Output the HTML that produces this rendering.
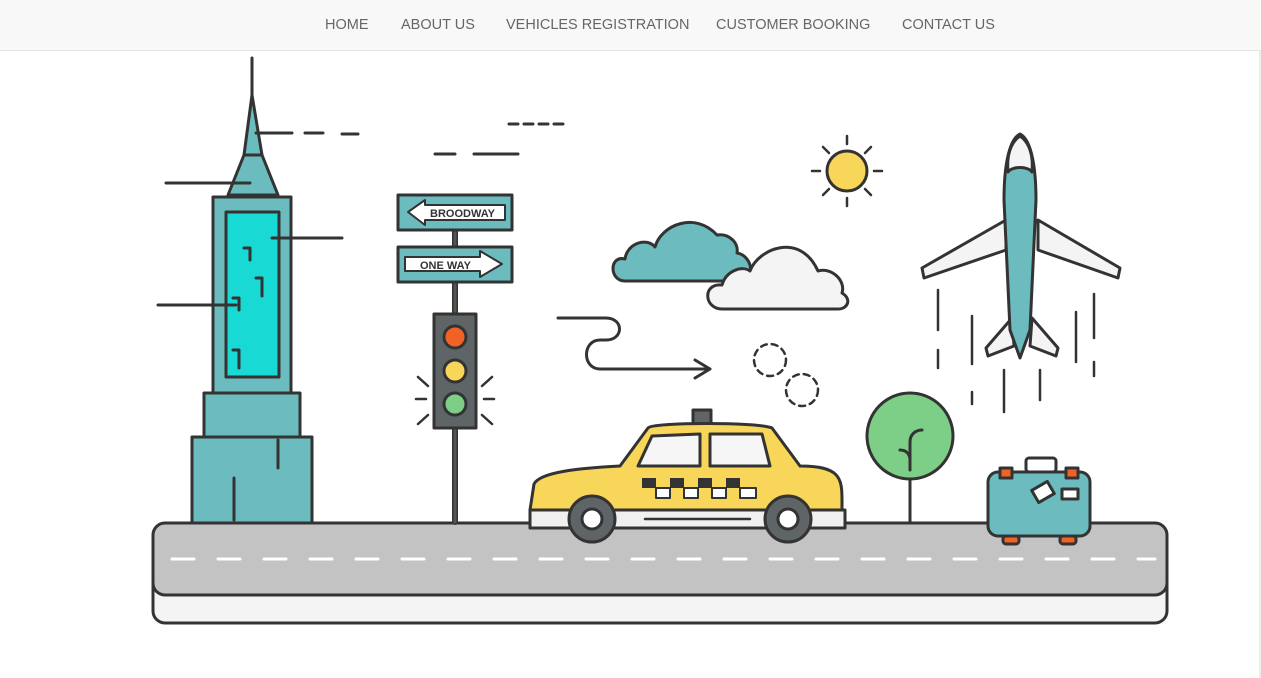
<!DOCTYPE html><html><head><style>
body{margin:0;width:1261px;height:678px;overflow:hidden;background:#fff;font-family:"Liberation Sans",sans-serif}
nav{position:absolute;left:0;top:0;width:1261px;height:50px;background:#f8f8f8;border-bottom:1px solid #e6e6e6}
nav a{position:absolute;top:17px;font-size:14.5px;color:#666;text-decoration:none}
svg{position:absolute;left:0;top:0}
</style></head><body>
<nav><a style="left:325px">HOME</a><a style="left:401px">ABOUT US</a><a style="left:506px">VEHICLES REGISTRATION</a><a style="left:716px">CUSTOMER BOOKING</a><a style="left:902px">CONTACT US</a></nav>
<div style="position:absolute;left:1259px;top:51px;width:2px;height:627px;background:#eee"></div>
<svg width="1261" height="678" stroke="#333" stroke-width="3" fill="none" stroke-linejoin="round" stroke-linecap="round">
<rect x="153" y="560" width="1014" height="63" rx="12" fill="#f4f4f4"/>
<rect x="153" y="523" width="1014" height="72" rx="12" fill="#c3c3c3"/>
<line x1="172" y1="559" x2="1155" y2="559" stroke="#fff" stroke-dasharray="22 24"/>
<line x1="252" y1="58" x2="252" y2="95"/>
<path d="M252 95 L244 155 L228 195 L278 195 L262 155 Z" fill="#6cbcbf"/>
<line x1="244" y1="155" x2="262" y2="155"/>
<rect x="213" y="197" width="78" height="196" fill="#6cbcbf"/>
<rect x="226" y="212" width="53" height="165" fill="#19d9d4"/>
<path d="M244 248h6v12M256 278h6v18M233 298h6v12M233 350h6v18" />
<rect x="204" y="393" width="96" height="44" fill="#6cbcbf"/>
<rect x="192" y="437" width="120" height="86" fill="#6cbcbf"/>
<line x1="278" y1="440" x2="278" y2="468"/><line x1="234" y1="478" x2="234" y2="520"/>
<path d="M166 183h84M256 133h36M305 133h18M342 134h16M272 238h70M158 305h78M435 154h20M474 154h44"/>
<line x1="509" y1="124" x2="567" y2="124" stroke-dasharray="9 6"/>
<line x1="455" y1="225" x2="455" y2="522" stroke-width="6"/>
<line x1="455" y1="225" x2="455" y2="522" stroke="#555" stroke-width="3"/>
<rect x="398" y="195" width="114" height="35" fill="#6cbcbf"/>
<path d="M408 212 L425 200 L425 205 L505 205 L505 220 L425 220 L425 225 Z" fill="#fff" stroke-width="2"/>
<text x="430" y="217" font-size="11" font-weight="bold" fill="#333" stroke="none">BROODWAY</text>
<rect x="398" y="247" width="114" height="35" fill="#6cbcbf"/>
<path d="M405 257 L480 257 L480 251 L502 264 L480 277 L480 271 L405 271 Z" fill="#fff" stroke-width="2"/>
<text x="420" y="269" font-size="11" font-weight="bold" fill="#333" stroke="none">ONE WAY</text>
<rect x="434" y="314" width="42" height="114" fill="#5f6466"/>
<circle cx="455" cy="337" r="11" fill="#f06225"/><circle cx="455" cy="371" r="11" fill="#f8d65a"/><circle cx="455" cy="404" r="11" fill="#7dce86"/>
<path d="M418 377l10 9M416 399h10M418 424l10-9M492 377l-10 9M494 399h-10M492 424l-10-9" stroke-width="2.5"/>
<path d="M558 318h48c18 0 18 22 0 22h-6c-18 0-18 29 0 29h110M695 360l15 9-15 9"/>
<circle cx="770" cy="360" r="16" stroke-dasharray="6 5" stroke-width="2.5"/><circle cx="802" cy="390" r="16" stroke-dasharray="6 5" stroke-width="2.5"/>
<path d="M625 281c-16 0-16-26 0-22 2-16 22-22 30-12 6-22 40-36 62-12 12-2 22 8 20 18 14 2 20 24 4 28Z" fill="#6cbcbf"/>
<path d="M722 309c-18 0-20-26 0-24 4-14 20-20 28-14 8-22 50-40 68 0 14-4 28 10 24 22 10 6 6 16-4 16Z" fill="#f4f4f4"/>
<circle cx="847" cy="171" r="20" fill="#f8d65a"/>
<path d="M847 136v8M847 198v8M812 171h8M874 171h8M823 147l6 6M865 189l6 6M823 195l6-6M865 153l6-6" stroke-width="2.5"/>
<path d="M1006 220 L922 268 L924 278 L1006 250 Z M1038 220 L1120 268 L1118 278 L1038 250 Z" fill="#f4f4f4"/>
<path d="M1012 318 L986 348 L988 356 L1014 346 Z M1032 318 L1058 348 L1056 356 L1030 346 Z" fill="#f4f4f4"/>
<path d="M1020 134 C1008 140 1004 170 1004 200 L1010 330 L1020 358 L1030 330 L1036 200 C1036 170 1032 140 1020 134Z" fill="#6cbcbf"/>
<path d="M1008 172 C1012 166 1028 166 1032 172 C1034 150 1026 140 1020 136 C1014 140 1006 150 1008 172Z" fill="#f4f4f4"/>
<path d="M938 290v40M938 350v18M972 316v48M972 392v12M1004 370v42M1040 370v30M1076 312v50M1094 294v44M1094 362v14" stroke-width="2.5"/>
<line x1="910" y1="440" x2="910" y2="522"/>
<circle cx="910" cy="436" r="43" fill="#7dce86"/>
<path d="M910 470v-28c0-8 6-12 12-12M910 460c0-6-4-10-10-10"/>
<rect x="1026" y="458" width="30" height="14" rx="3" fill="#fff"/>
<rect x="1003" y="536" width="16" height="8" rx="3" fill="#f06225"/><rect x="1060" y="536" width="16" height="8" rx="3" fill="#f06225"/>
<rect x="988" y="472" width="102" height="64" rx="10" fill="#6cbcbf"/>
<rect x="1000" y="468" width="12" height="10" fill="#f06225"/><rect x="1066" y="468" width="12" height="10" fill="#f06225"/>
<rect x="1034" y="485" width="18" height="14" fill="#fff" transform="rotate(-30 1043 492)"/>
<rect x="1062" y="489" width="16" height="10" fill="#fff"/>
<rect x="693" y="410" width="18" height="14" fill="#5f6466"/>
<path d="M530 510 L534 484 C540 472 580 468 620 466 L648 428 C652 422 760 422 772 428 L800 466 C840 466 842 478 842 500 L842 510 Z" fill="#f8d65a"/>
<path d="M638 466 L652 436 L700 434 L700 466Z M710 434 L762 434 L770 466 L710 466Z" fill="#f6f6f6"/>
<path d="M530 510 H845 V528 H530Z" fill="#f0f0f0"/>
<line x1="645" y1="519" x2="750" y2="519" stroke-width="2.5"/>
<g fill="#333" stroke="none"><rect x="642" y="478" width="14" height="10"/><rect x="670" y="478" width="14" height="10"/><rect x="698" y="478" width="14" height="10"/><rect x="726" y="478" width="14" height="10"/>
<rect x="656" y="488" width="14" height="10" fill="#fff" stroke="#333" stroke-width="2"/><rect x="684" y="488" width="14" height="10" fill="#fff" stroke="#333" stroke-width="2"/><rect x="712" y="488" width="14" height="10" fill="#fff" stroke="#333" stroke-width="2"/><rect x="740" y="488" width="16" height="10" fill="#fff" stroke="#333" stroke-width="2"/></g>
<circle cx="592" cy="519" r="23" fill="#5f6466"/><circle cx="592" cy="519" r="10" fill="#fff"/>
<circle cx="788" cy="519" r="23" fill="#5f6466"/><circle cx="788" cy="519" r="10" fill="#fff"/>
</svg>
</body></html>
